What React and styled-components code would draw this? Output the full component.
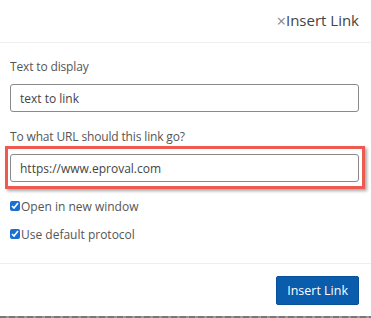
import React from "react";
import styled, { createGlobalStyle } from "styled-components";

const GlobalStyle = createGlobalStyle`
  html, body {
    margin: 0;
    padding: 0;
    background: #ffffff;
  }
  body {
    font-family: "Open Sans", "Liberation Sans", sans-serif;
    color: #555;
  }
`;

const App = () => {
  return (
    <>
      <GlobalStyle />
      <Dialog>
        {/* header */}
        <Header>
          <Close>×</Close>
          <Title>Insert Link</Title>
        </Header>
        {/* body */}
        <Body>
          <Label>Text to display</Label>
          <Field>
            <Input defaultValue="text to link" />
          </Field>
          <Label>To what URL should this link go?</Label>
          <Field highlight>
            <Input defaultValue="https://www.eproval.com" />
          </Field>
          <CheckRow>
            <Check type="checkbox" defaultChecked />
            Open in new window
          </CheckRow>
          <CheckRow>
            <Check type="checkbox" defaultChecked />
            Use default protocol
          </CheckRow>
        </Body>
        {/* footer */}
        <Footer>
          <Button>Insert Link</Button>
        </Footer>
        <BottomEdge />
      </Dialog>
    </>
  );
};

export default App;

const Dialog = styled.div`
  width: 371px;
  height: 318px;
  display: flex;
  flex-direction: column;
  background: #fff;
  box-sizing: border-box;
`;

const Header = styled.div`
  height: 43px;
  display: flex;
  align-items: center;
  justify-content: flex-end;
  padding: 0 12px 2px 0;
  border-bottom: 1px solid #efefef;
  box-sizing: border-box;
`;

const Close = styled.span`
  font-size: 16px;
  color: #888;
  line-height: 1;
  margin-top: 1px;
`;

const Title = styled.span`
  font-size: 15px;
  color: #444;
`;

const Body = styled.div`
  display: flex;
  flex-direction: column;
  padding: 15px 12px 0 10px;
  height: 221px;
  box-sizing: border-box;
  border-bottom: 1px solid #efefef;
`;

const Label = styled.div`
  font-size: 12px;
  letter-spacing: -0.15px;
  line-height: 18px;
  color: #555;
  margin-bottom: 8px;
`;

const Field = styled.div`
  margin: ${(p) => (p.highlight ? "-8px -6px 8px -5px" : "0 0 16px 0")};
  padding: ${(p) => (p.highlight ? "5px 3px 4px 2px" : "0")};
  border: ${(p) => (p.highlight ? "3px solid #ec5a50" : "none")};
  box-shadow: ${(p) => (p.highlight ? "2px 2px 3px rgba(0,0,0,0.35)" : "none")};
`;

const Input = styled.input`
  display: block;
  width: 100%;
  height: 28px;
  box-sizing: border-box;
  border: 1px solid #8a8a8a;
  border-radius: 3px;
  padding: 0 9px;
  font-family: "Open Sans", "Liberation Sans", sans-serif;
  font-size: 12px;
  color: #444;
  outline: none;
`;

const CheckRow = styled.label`
  display: flex;
  align-items: center;
  font-size: 12px;
  color: #555;
  height: 18px;
  margin-bottom: 10px;
`;

const Check = styled.input`
  width: 10px;
  height: 10px;
  margin: 0 1px 0 0;
  accent-color: #1a6fd0;
`;

const Footer = styled.div`
  flex: 1;
  display: flex;
  justify-content: flex-end;
  align-items: flex-start;
  padding: 12px 12px 0 0;
`;

const Button = styled.button`
  height: 29px;
  padding: 0 10px;
  background: #0a5cad;
  color: #fff;
  border: 1px solid #0a5099;
  border-radius: 2px;
  font-family: "Open Sans", "Liberation Sans", sans-serif;
  font-size: 12.5px;
  cursor: pointer;
`;

const BottomEdge = styled.div`
  height: 2px;
  background: repeating-linear-gradient(90deg, #777 0 6px, #999 6px 9px);
`;
